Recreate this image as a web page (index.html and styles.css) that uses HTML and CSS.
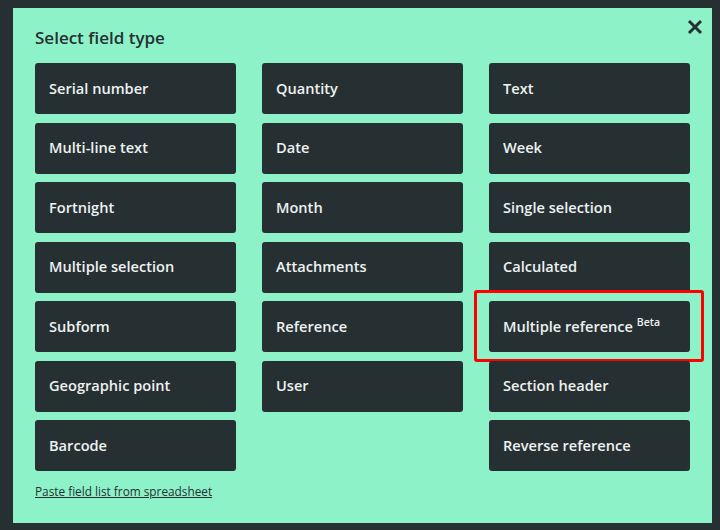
FILE: index.html
```html
<!DOCTYPE html>
<html lang="en">
<head>
    <meta charset="UTF-8">
    <title>Select field type</title>
    <link rel="stylesheet" href="styles.css">
</head>
<body>
    <div class="dialog">
        <button type="button" class="close" aria-label="Close">
            <svg width="16" height="16" viewBox="0 0 16 16">
                <path d="M2 2L14 14M14 2L2 14" stroke="#263033" stroke-width="3" fill="none"/>
            </svg>
        </button>
        <h2>Select field type</h2>
        <div class="types">
            <button type="button">Serial number</button>
            <button type="button">Quantity</button>
            <button type="button">Text</button>
            <button type="button">Multi-line text</button>
            <button type="button">Date</button>
            <button type="button">Week</button>
            <button type="button">Fortnight</button>
            <button type="button">Month</button>
            <button type="button">Single selection</button>
            <button type="button">Multiple selection</button>
            <button type="button">Attachments</button>
            <button type="button">Calculated</button>
            <button type="button">Subform</button>
            <button type="button">Reference</button>
            <button type="button" class="marked">Multiple reference <sup>Beta</sup></button>
            <button type="button">Geographic point</button>
            <button type="button">User</button>
            <button type="button">Section header</button>
            <button type="button">Barcode</button>
            <span></span>
            <button type="button">Reverse reference</button>
        </div>
        <a href="#" class="paste">Paste field list from spreadsheet</a>
    </div>
</body>
</html>
```

FILE: styles.css
```css
body {
    margin: 0;
    background-color: #263033;
    font-family: "Open Sans", sans-serif;
}

.dialog {
    position: relative;
    box-sizing: border-box;
    width: 699px;
    height: 515px;
    margin: 8px 0 0 13px;
    padding: 18px 22px;
    background-color: #8ef2c9;
    color: #263033;
}

.dialog h2 {
    margin: 0 0 13px;
    font-size: 17px;
    font-weight: 600;
    line-height: 24px;
}

.close {
    position: absolute;
    top: 11px;
    right: 9px;
    padding: 0;
    border: none;
    background: none;
    cursor: pointer;
}

.types {
    display: grid;
    grid-template-columns: repeat(3, 201px);
    grid-auto-rows: 51px;
    column-gap: 26px;
    row-gap: 8.5px;
}

.types button {
    position: relative;
    padding: 0 14px 2px;
    border: none;
    border-radius: 3px;
    background-color: #263033;
    color: #eef2f0;
    font-family: "Open Sans", sans-serif;
    font-size: 14.6px;
    font-weight: 600;
    text-align: left;
    cursor: pointer;
}

.types sup {
    font-size: 10.5px;
    vertical-align: 6px;
    line-height: 0;
}

.marked::after {
    content: "";
    position: absolute;
    top: -11px;
    right: -14px;
    bottom: -10px;
    left: -15px;
    border: 3px solid #ff0000;
    border-radius: 3px;
}

.paste {
    display: inline-block;
    margin-top: 12px;
    color: #263033;
    font-size: 11.8px;
}
```
